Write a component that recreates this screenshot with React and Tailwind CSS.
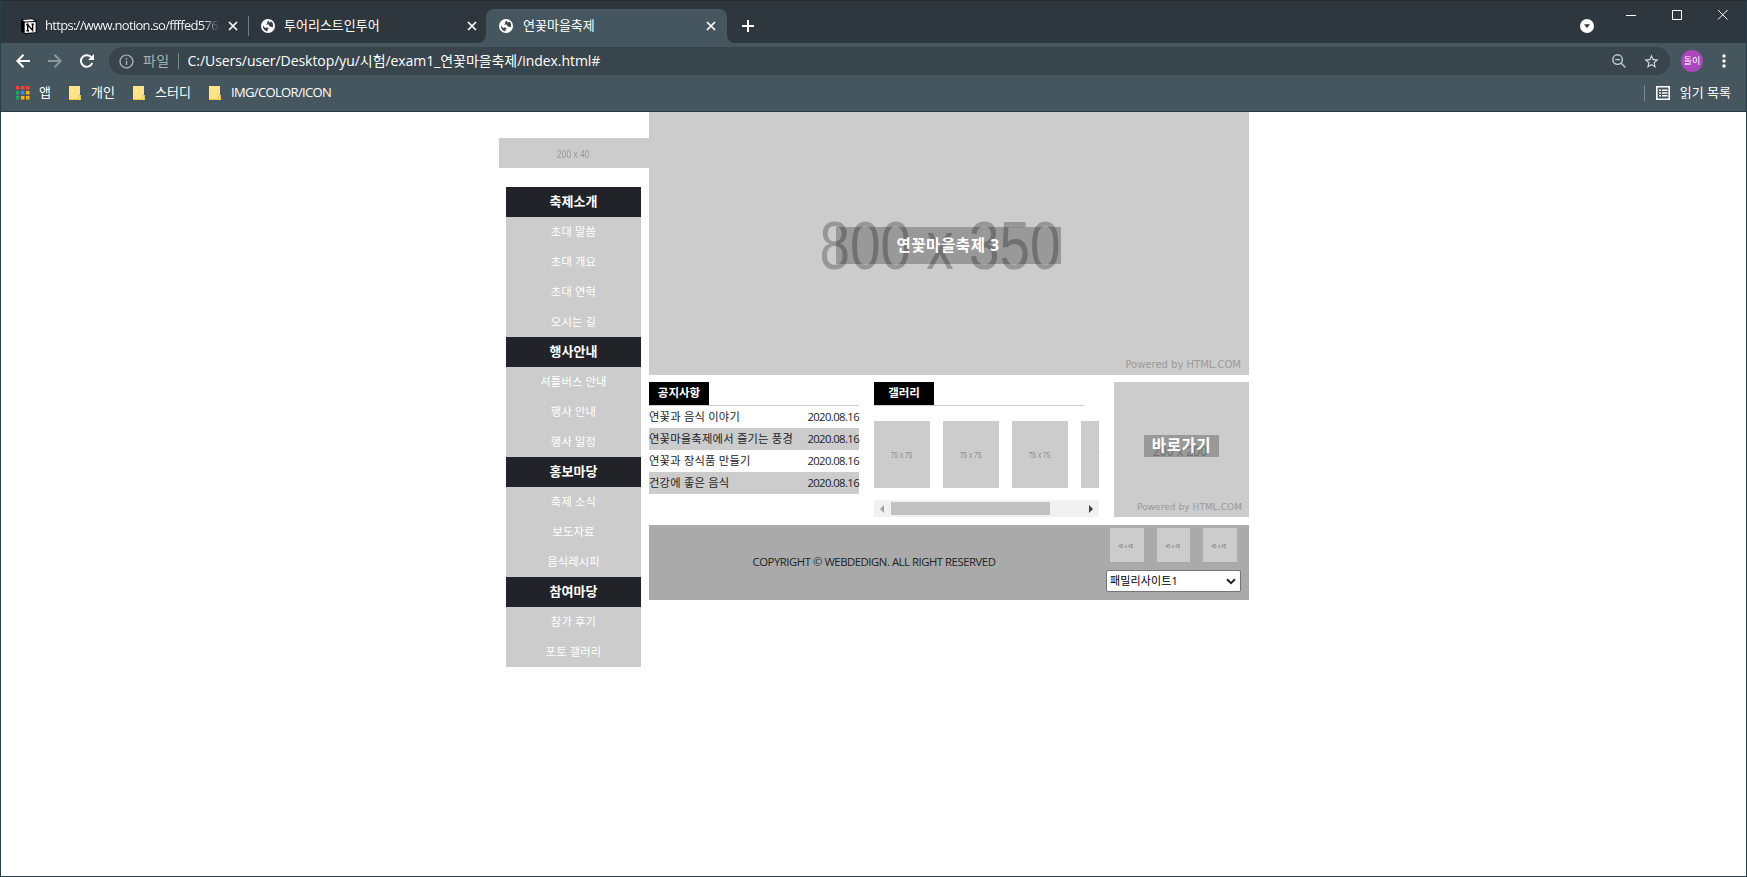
import React from "react";
import {
  MdInfoOutline,
  MdStarBorder,
  MdMoreVert,
} from "react-icons/md";

const menu = [
  { title: "축제소개", items: ["초대 말씀", "초대 개요", "초대 연혁", "오시는 길"] },
  { title: "행사안내", items: ["셔틀버스 안내", "행사 안내", "행사 일정"] },
  { title: "홍보마당", items: ["축제 소식", "보도자료", "음식레시피"] },
  { title: "참여마당", items: ["참가 후기", "포토 갤러리"] },
];

const notices = [
  "연꽃과 음식 이야기",
  "연꽃마을축제에서 즐기는 풍경",
  "연꽃과 장식품 만들기",
  "건강에 좋은 음식",
];

const apps = [
  "bg-[#ff3b30]", "bg-[#ff3b30]", "bg-[#ff3b30]",
  "bg-[#1fa463]", "bg-[#2d8cff]", "bg-[#ffb300]",
  "bg-[#1fa463]", "bg-[#ffb300]", "bg-[#ffb300]",
];

function Close({ className }) {
  return (
    <svg className={`h-[14px] w-[14px] shrink-0 ${className}`} viewBox="0 0 14 14" fill="none" stroke="#fff" strokeWidth="1.7">
      <path d="M3 3 11 11M11 3 3 11" />
    </svg>
  );
}

function Arrow({ className }) {
  return (
    <svg className={`size-[14px] shrink-0 ${className}`} viewBox="0 0 14 14" fill="none" stroke="currentColor" strokeWidth="2">
      <path d="M14 7H1.5M7.5 .8 1.4 7 7.5 13.2" />
    </svg>
  );
}

function Globe() {
  return (
    <svg className="size-[14px] shrink-0" viewBox="0 0 14 14">
      <circle cx="7" cy="7" r="7" fill="#fff" />
      <path d="M7.6 1.6 6 3.2 6.3 4.6 4.6 5.6H7.6L8.8 7.4 11.8 8.2C12.6 6 12 3.6 10.2 2.4L8.6 3.8ZM2 6.4C1.6 9.6 3.8 12 6.6 12.3L6.4 10.6 8 9.4 5.4 8.2 4.4 9.2Z" fill="#37444b" />
    </svg>
  );
}

function Notion() {
  return (
    <svg className="size-4 shrink-0" viewBox="0 0 16 16">
      <path d="M0 1.5 11.5.5 15.5 3V15L4 16 0 13Z" fill="#000" />
      <path d="M1.4 1.9 11.2 1.2 13.8 2.9 3.8 3.5Z" fill="#fff" />
      <path d="M3.7 4.5 14.6 3.9V14.3L3.7 15Z" fill="#fff" />
      <path d="M6.7 12.6V6.6L11.6 12.4V6.2M5.2 6.5H7.6M10.4 6.1H13M5.4 12.7H8" stroke="#000" strokeWidth="1.4" fill="none" />
    </svg>
  );
}

function Folder({ children }) {
  return (
    <div className="flex items-center">
      <svg className="h-[14px] w-[12px]" viewBox="0 0 12 14">
        <path d="M0 0H11V9H12V14H0Z" fill="#ffe38a" />
        <path d="M0 13.5H9.5V9.5H11.5V13.5" fill="none" stroke="#f0c64a" />
      </svg>
      {children}
    </div>
  );
}

function TopBar() {
  return (
    <header className="h-[112px] shrink-0 border-b border-[#2c3a42] bg-[#45565f] text-white">
      <div className="flex h-[43px] items-start border-t border-[#292a2d] bg-[#2d373d]">
        <div className="mt-[8px] flex h-[34px] w-[226px] items-center pl-[20px]">
          <Notion />
          <span className="ml-[8px] w-[175px] shrink-0 overflow-hidden whitespace-nowrap bg-linear-to-r from-white from-90% to-transparent bg-clip-text text-[13px] tracking-[-0.7px] text-transparent">
            https://www.notion.so/ffffed5767
          </span>
          <Close className="ml-[6px]" />
        </div>
        <div className="mt-[15px] ml-[21px] h-5 w-px bg-[#707a80]" />
        <div className="mt-[8px] flex h-[34px] w-[237px] items-center pl-[12px]">
          <Globe />
          <span className="ml-[9px] flex-1 pb-px text-[13px]">투어리스트인투어</span>
          <Close className="mr-[7px]" />
        </div>
        <div className="relative mt-[8px] flex h-[34px] w-[241px] items-center rounded-t-[8px] bg-[#45565f] pl-[13px]">
          <svg className="absolute bottom-0 -left-[8px] size-[8px]" viewBox="0 0 8 8"><path d="M8 0V8H0A8 8 0 0 0 8 0Z" fill="#45565f" /></svg>
          <svg className="absolute -right-[8px] bottom-0 size-[8px]" viewBox="0 0 8 8"><path d="M0 0V8H8A8 8 0 0 1 0 0Z" fill="#45565f" /></svg>
          <Globe />
          <span className="ml-[10px] flex-1 pb-px text-[13px]">연꽃마을축제</span>
          <Close className="mr-[9px]" />
        </div>
        <svg className="mt-[19px] ml-[15px] size-[12px]" viewBox="0 0 12 12" stroke="#fff" strokeWidth="2">
          <path d="M0 6H12M6 0V12" />
        </svg>
        <div className="flex-1" />
        <svg className="mt-[18px] size-[14px]" viewBox="0 0 14 14">
          <circle cx="7" cy="7" r="7" fill="#fff" />
          <path d="M4 5.3H10L7 9Z" fill="#2d373d" />
        </svg>
        <svg className="mt-[8px] mr-[18px] ml-[31px] h-[12px] w-[103px]" viewBox="0 0 103 12" fill="none" stroke="#fff">
          <path d="M1 6.5H11M47.5 1.5H56.5V10.5H47.5ZM93 1 102.5 10.5M102.5 1 93 10.5" />
        </svg>
      </div>
      <div className="flex h-[36px] items-center">
        <Arrow className="ml-[15px]" />
        <Arrow className="ml-[18px] rotate-180 text-[#8b979d]" />
        <svg className="ml-[18px] size-[14px]" viewBox="0 0 14 14">
          <path d="M12.2 9A5.8 5.8 0 1 1 10.8 2.8L12 4" fill="none" stroke="#fff" strokeWidth="2" />
          <path d="M14 0V6H8Z" fill="#fff" />
        </svg>
        <div className="ml-[15px] flex h-[28px] w-[1561px] items-center rounded-full bg-[#39454c] pr-[10px] pl-[9px]">
          <MdInfoOutline className="size-[17px] text-[#a8b0b4]" />
          <span className="ml-[8px] pb-px text-[14px] tracking-[0.4px] text-[#a8b0b4]">파일</span>
          <span className="ml-[8px] h-4 w-px bg-[#7c878d]" />
          <span className="ml-[9px] flex-1 pb-px whitespace-nowrap text-[14px] tracking-[-0.06px]">
            C:/Users/user/Desktop/yu/시험/exam1_연꽃마을축제/index.html#
          </span>
          <svg className="size-[14px]" viewBox="0 0 14 14" fill="none" stroke="#c4cacd" strokeWidth="1.4">
            <circle cx="5.6" cy="5.6" r="4.8" />
            <path d="M9 9 13.4 13.4M3.2 5.6H8" />
          </svg>
          <MdStarBorder className="ml-[17px] size-[17px] text-[#d5dadc]" />
        </div>
        <div className="ml-[11px] flex size-[22px] items-center justify-center rounded-full bg-[#ab47bc] pb-px text-[9px]">돌이</div>
        <MdMoreVert className="ml-[11px] size-[20px]" />
      </div>
      <div className="flex h-[28px] items-center text-[13px]">
        <svg className="ml-[15px] size-[14px] shrink-0" viewBox="0 0 14 14">
          {apps.map((c, i) => (
            <rect
              key={i}
              x={(i % 3) * 5}
              y={Math.floor(i / 3) * 5}
              width="3.5"
              height="3.5"
              fill={c.slice(4, -1)}
            />
          ))}
        </svg>
        <span className="ml-[9px] w-[30px] pb-px">앱</span>
        <Folder><span className="ml-[10px] w-[42px] pb-px">개인</span></Folder>
        <Folder><span className="ml-[10px] w-[54px] pb-px">스터디</span></Folder>
        <Folder><span className="ml-[10px] pb-px tracking-[-0.65px]">IMG/COLOR/ICON</span></Folder>
        <div className="flex-1" />
        <span className="h-4 w-px bg-[#7c878d]" />
        <svg className="ml-[11px] size-[14px]" viewBox="0 0 14 14" fill="none" stroke="#fff">
          <path strokeWidth="1.6" d="M.8.8H13.2V13.2H.8Z" />
          <path strokeWidth="1.4" d="M3 4.3H5M6 4.3H11.5M3 7H5M6 7H11.5M3 9.7H5M6 9.7H11.5" />
        </svg>
        <span className="mr-[15px] ml-[10px] pb-px whitespace-nowrap">읽기 목록</span>
      </div>
    </header>
  );
}

function Heading({ children }) {
  return (
    <div className="h-[24px] w-[210px] border-b border-[#cccccc]">
      <h2 className="flex h-[23px] w-[60px] items-center justify-center bg-black pb-[1px] text-[11.5px] font-bold text-white">
        {children}
      </h2>
    </div>
  );
}

function Sidebar() {
  return (
    <aside className="w-[150px] pt-[26px]">
      <div className="flex h-[30px] items-center justify-center bg-[#ccc] pt-[3px] pr-[2px] font-['Liberation_Sans'] text-[10px] text-[#969696]">
        <span className="scale-x-[.84]">200 x 40</span>
      </div>
      <nav className="mt-[19px] ml-[7px] w-[135px] bg-[#ccc] text-center text-white">
        {menu.map((m) => (
          <div key={m.title}>
            <h3 className="h-[30px] bg-[#222328] text-[13px] leading-[29px] font-bold">{m.title}</h3>
            {m.items.map((t) => (
              <p key={t} className="h-[30px] text-[11.3px] leading-[29px] tracking-[0.15px]">{t}</p>
            ))}
          </div>
        ))}
      </nav>
    </aside>
  );
}

function Gallery() {
  return (
    <section className="ml-[15px] w-[225px]">
      <Heading>갤러리</Heading>
      <div className="mt-[15px] flex h-[67px] gap-[13px] overflow-hidden font-['Liberation_Sans'] text-[9.5px] text-[#8c8c8c]">
        {[0, 1, 2, 3].map((i) => (
          <div key={i} className="flex w-[56px] shrink-0 items-center justify-center bg-[#ccc] pt-[2px] pr-[1px]">
            <span className="scale-x-[.7] whitespace-nowrap">75 x 75</span>
          </div>
        ))}
      </div>
      <div className="mt-[12px] flex h-[17px] items-center justify-between bg-[#f1f1f1] px-[6px]">
        <svg className="h-[8px] w-[4px]" viewBox="0 0 4 8"><path d="M4 0V8L0 4Z" fill="#a3a3a3" /></svg>
        <div className="mr-auto ml-[7px] h-[13px] w-[159px] bg-[#c1c1c1]" />
        <svg className="h-[8px] w-[4px]" viewBox="0 0 4 8"><path d="M0 0V8L4 4Z" fill="#404040" /></svg>
      </div>
    </section>
  );
}

export default function App() {
  return (
    <div className="flex h-[877px] w-[1747px] flex-col overflow-hidden border-r border-b border-l border-[#24404f] bg-white font-['Open_Sans','Noto_Sans_CJK_KR',sans-serif]">
      <TopBar />
      <div className="ml-[498px] flex">
        <Sidebar />
        <main className="w-[600px] text-[#222328]">
          <div className="relative flex h-[263px] items-center justify-center bg-[#ccc]">
            <span className="absolute top-[95px] left-[291px] -translate-x-1/2 scale-x-[.795] font-['Liberation_Sans'] text-[69px] leading-[78px] whitespace-nowrap text-[#979797]">
              800 x 350
            </span>
            <div className="relative mt-[4px] mr-[2px] flex h-[37px] w-[225px] items-center justify-center bg-black/25 text-[15.5px] font-bold tracking-[0.6px] text-white">
              연꽃마을축제 3
            </div>
            <span className="absolute right-[8px] bottom-[3px] font-['DejaVu_Sans'] text-[10px] text-[#999]">
              Powered by HTML.COM
            </span>
          </div>
          <div className="mt-[7px] flex h-[135px]">
            <section className="w-[210px]">
              <Heading>공지사항</Heading>
              <ul className="text-[11.3px]">
                {notices.map((n) => (
                  <li key={n} className="flex h-[22px] items-center justify-between whitespace-nowrap even:bg-[#ccc]">
                    <span className="tracking-[0.2px]">{n}</span>
                    <span className="tracking-[-0.6px]">2020.08.16</span>
                  </li>
                ))}
              </ul>
            </section>
            <Gallery />
            <section className="relative ml-[15px] flex w-[135px] justify-center bg-[#ccc]">
              <span className="absolute top-[62px] left-[66px] -translate-x-1/2 scale-x-[.88] font-['Liberation_Sans'] text-[14px] leading-[15px] whitespace-nowrap text-[#959595]">
                200 x 200
              </span>
              <div className="relative mt-[53px] flex h-[22px] w-[75px] items-center justify-center bg-black/25 text-[15.5px] font-bold tracking-[0.6px] text-white">
                바로가기
              </div>
              <span className="absolute right-[7px] bottom-[3px] font-['DejaVu_Sans'] text-[9px] tracking-[0.05px] whitespace-nowrap text-[#999]">
                Powered by HTML.COM
              </span>
            </section>
          </div>
          <footer className="mt-[8px] flex h-[75px] bg-[#aaa]">
            <p className="w-[450px] text-center text-[11.3px] leading-[74px] tracking-[-0.45px]">
              COPYRIGHT © WEBDEDIGN. ALL RIGHT RESERVED
            </p>
            <div className="ml-[7px] w-[135px] pt-[3px]">
              <div className="flex gap-[13px] pl-[4px]">
                {[0, 1, 2].map((i) => (
                  <div key={i} className="flex h-[34px] w-[33.5px] items-center justify-center bg-[#ccc] pt-[2px] pr-px font-['Liberation_Sans'] text-[6px] whitespace-nowrap text-[#777]">
                    <span className="scale-x-[.75]">45 x 45</span>
                  </div>
                ))}
              </div>
              <div className="mt-[8px] flex h-[22px] items-center justify-between rounded-[2px] border border-[#767676] bg-white pr-[4px] pl-[3px] text-[11px] text-black">
                <span className="tracking-[0.15px]">패밀리사이트1</span>
                <svg className="h-[7px] w-[10px]" viewBox="0 0 10 7" fill="none" stroke="#222" strokeWidth="2"><path d="M1 1.2 5 5.2 9 1.2" /></svg>
              </div>
            </div>
          </footer>
        </main>
      </div>
    </div>
  );
}
